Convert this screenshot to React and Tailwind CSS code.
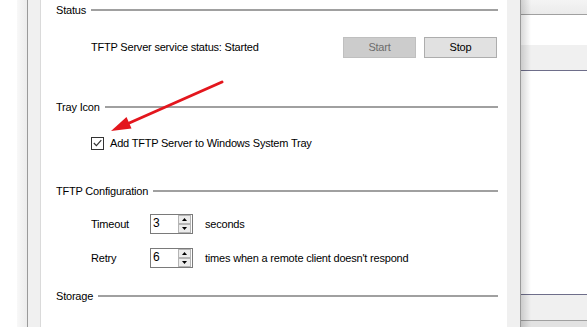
import React from "react";

function Header({ label }) {
  return (
    <div className="flex h-4 items-center">
      <span className="leading-4">{label}</span>
      <div className="ml-[5px] h-[2px] flex-1 bg-[#a0a0a0]" />
    </div>
  );
}

function SpinHalf({ up }) {
  return (
    <div className="flex flex-1 items-center justify-center border border-[#b4b4b4] bg-[#ececec]">
      <svg width="5" height="3" viewBox="0 0 5 3">
        {up ? <path d="M0 3 L5 3 L2.5 0 Z" fill="#000" /> : <path d="M0 0 L5 0 L2.5 3 Z" fill="#000" />}
      </svg>
    </div>
  );
}

function Spin({ value }) {
  return (
    <div className="flex h-[20px] w-[43px] shrink-0 items-stretch border border-[#7a7a7a] bg-white">
      <span className="flex-1 pl-[2px] leading-[17px] text-[12px]">{value}</span>
      <div className="mr-px flex w-[13px] flex-col">
        <SpinHalf up />
        <SpinHalf />
      </div>
    </div>
  );
}

export default function App() {
  return (
    <div className="relative flex h-[327px] w-[587px] overflow-hidden bg-white font-['Liberation_Sans',Arial,sans-serif] text-[11px] tracking-[-0.2px] text-black">
      {/* left frame */}
      <div className="w-[17px] shrink-0 bg-white" />
      <div className="w-[10px] shrink-0 bg-gradient-to-r from-[#f8f8f8] to-[#ececec]" />
      <div className="w-px shrink-0 bg-[#9a9a9a]" />
      <div className="w-[12px] shrink-0 bg-[#f0f0f0]" />
      <div className="w-px shrink-0 bg-[#dadada]" />

      {/* main panel */}
      <div className="flex w-[466px] shrink-0 flex-col pl-[15px] pr-[9px] pt-[2px]">
        <Header label="Status" />
        <div className="mt-[19px] flex h-[21px] items-center pl-[35px]">
          <span>TFTP Server service status: Started</span>
          <div className="ml-auto mr-px flex gap-2">
            <button className="h-[21px] w-[73px] border border-[#bfbfbf] bg-[#cccccc] text-[#6d6d6d]">Start</button>
            <button className="h-[21px] w-[73px] border border-[#adadad] bg-[#e1e1e1] text-black">Stop</button>
          </div>
        </div>

        <div className="mt-[41px]">
          <Header label="Tray Icon" />
        </div>
        <div className="mt-[20px] flex h-4 items-center pl-[35px]">
          <div className="flex h-[13px] w-[13px] items-center justify-center border border-[#333333] bg-white">
            <svg width="9" height="8" viewBox="0 0 9 8">
              <path d="M0.8 4 L3.4 6.6 L8.3 1.2" fill="none" stroke="#333" strokeWidth="1.2" />
            </svg>
          </div>
          <span className="ml-[6px]">Add TFTP Server to Windows System Tray</span>
        </div>

        <div className="mt-[32px]">
          <Header label="TFTP Configuration" />
        </div>
        <div className="mt-[15px] flex h-[20px] items-center pl-[35px]">
          <span className="w-[59px]">Timeout</span>
          <Spin value="3" />
          <span className="ml-[12px]">seconds</span>
        </div>
        <div className="mt-[14px] flex h-[20px] items-center pl-[35px]">
          <span className="w-[59px]">Retry</span>
          <Spin value="6" />
          <span className="ml-[12px]">times when a remote client doesn't respond</span>
        </div>

        <div className="mt-[20px]">
          <Header label="Storage" />
        </div>
      </div>

      {/* right frame */}
      <div className="w-[13px] shrink-0 bg-[#f0f0f0]" />
      <div className="w-px shrink-0 bg-[#9a9a9a]" />
      <div className="relative flex flex-1 flex-col">
        <div className="h-[14px] bg-gradient-to-b from-[#f4f4f4] to-[#ebebeb]" />
        <div className="h-px bg-[#a0a0a0]" />
        <div className="h-[30px] bg-white" />
        <div className="h-[25px] bg-[#f0f0f0]" />
        <div className="h-px bg-[#6e6e8a]" />
        <div className="h-[223px] bg-white" />
        <div className="h-px bg-[#6e6e8a]" />
        <div className="h-[25px] bg-[#f0f0f0]" />
        <div className="h-px bg-[#a0a0a0]" />
        <div className="h-[6px] bg-[#e2e2e2]" />
        <div className="pointer-events-none absolute inset-y-0 left-0 w-[10px] bg-gradient-to-r from-black/15 to-transparent" />
      </div>

      {/* red annotation arrow */}
      <svg className="pointer-events-none absolute left-0 top-0" width="587" height="327" viewBox="0 0 587 327">
        <line x1="222" y1="82" x2="127" y2="124" stroke="#e3161d" strokeWidth="3" strokeLinecap="round" />
        <path d="M111 131 L131.5 128.5 L126.5 117 Z" fill="#e3161d" />
      </svg>
    </div>
  );
}
